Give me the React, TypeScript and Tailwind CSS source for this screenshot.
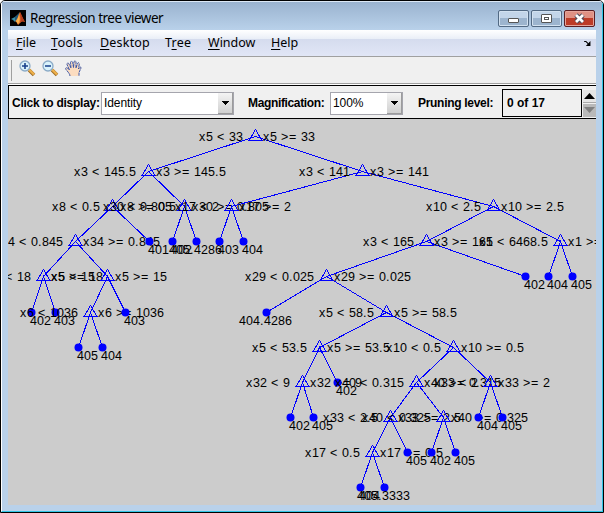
import React from "react";

type Split = { x: number; y: number; name: string; cut: string; l: Node; r: Node };
type Leaf = { x: number; y: number; value: string };
type Node = Split | Leaf;

const split = (x: number, row: number, name: string, cut: string, l: Node, r: Node): Split => ({
  x,
  y: rowY[row],
  name,
  cut,
  l,
  r,
});
const leaf = (x: number, row: number, value: string): Leaf => ({ x, y: rowY[row], value });

const rowY = [136, 171, 206, 241, 276, 312, 347, 382, 417, 452, 487];

const tree: Node = split(255, 0, "x5", "33",
  split(148, 1, "x3", "145.5",
    split(112, 2, "x8", "0.5",
      split(75, 3, "x34", "0.845",
        split(43, 4, "x5", "18", leaf(31, 5, "402"), leaf(55, 5, "403")),
        split(107, 4, "x5", "15",
          split(90, 5, "x6", "1036", leaf(78, 6, "405"), leaf(102, 6, "404")),
          leaf(125, 5, "403"))),
      leaf(149, 3, "401")),
    split(184, 2, "x30", "0.805", leaf(172, 3, "402"), leaf(196, 3, "405.4286"))),
  split(362, 1, "x3", "141",
    split(231, 2, "x17", "2", leaf(219, 3, "403"), leaf(243, 3, "404")),
    split(493, 2, "x10", "2.5",
      split(426, 3, "x3", "165",
        split(326, 4, "x29", "0.025",
          leaf(266, 5, "404.4286"),
          split(386, 5, "x5", "58.5",
            split(319, 6, "x5", "53.5",
              split(302, 7, "x32", "9", leaf(290, 8, "402"), leaf(313, 8, "405")),
              leaf(337, 7, "402")),
            split(453, 6, "x10", "0.5",
              split(416, 7, "x40", "0.315",
                split(390, 8, "x33", "2.5",
                  split(372, 9, "x17", "0.5", leaf(360, 10, "404"), leaf(384, 10, "405.3333")),
                  leaf(407, 9, "405")),
                split(443, 8, "x40", "0.325", leaf(431, 9, "402"), leaf(455, 9, "405"))),
              split(490, 7, "x33", "2", leaf(478, 8, "404"), leaf(502, 8, "405"))))),
        leaf(525, 4, "402")),
      split(560, 3, "x1", "6468.5", leaf(548, 4, "404"), leaf(572, 4, "405")))));

const advance = (c: string) => (c === " " || c === "." ? 4 : c === "<" || c === ">" || c === "=" ? 8 : 7);
const widthOf = (s: string) => [...s].reduce((n, c) => n + advance(c), 0);

function Label({ x, y, text }: { x: number; y: number; text: string }) {
  let at = x;
  const xs = [...text].map((c) => {
    const here = at;
    at += advance(c);
    return here;
  });
  return (
    <text x={xs.join(" ")} y={y} fill="#000" xmlSpace="preserve">
      {text}
    </text>
  );
}

function Branch({ node }: { node: Node }) {
  const { x, y } = node;
  if ("value" in node) {
    const left = node.value.length > 3 ? x - 27 : x - 1;
    return (
      <g>
        <circle cx={x + 0.5} cy={y + 0.5} r="4" fill="#00f" />
        <Label x={left} y={y + 13} text={node.value} />
      </g>
    );
  }
  const lower = `${node.name} < ${node.cut}`;
  return (
    <g>
      <path
        d={`M${node.l.x + 0.5} ${node.l.y + 0.5}L${x + 0.5} ${y + 0.5}L${node.r.x + 0.5} ${node.r.y + 0.5}M${x + 0.5} ${y - 6.5}l-6.5 11h13z`}
        fill="none"
        stroke="#00f"
        shapeRendering="crispEdges"
      />
      <Branch node={node.l} />
      <Branch node={node.r} />
      <Label x={x - 12 - widthOf(lower)} y={y + 5} text={lower} />
      <Label x={x + 8} y={y + 5} text={`${node.name} >= ${node.cut}`} />
    </g>
  );
}

function MatlabIcon() {
  return (
    <svg width="16" height="16" viewBox="0 0 16 16" className="bg-black">
      <path d="M1 9l4-2 3-2 2-2-2 5-3 4-2-2z" fill="#3a8fa8" />
      <path d="M5 7l3-3 2-2-2 6-3 3z" fill="#245b78" />
      <path d="M5 11c2 0 3-5 5-9 1 2 2 6 5 10-2-1-3-1-4 0l-3 3c-1-2-1-3-3-4z" fill="#e8772b" />
      <path d="M10 2c0 4 1 8 0 11 1-1 2-2 5-1-2-3-3-7-5-10z" fill="#b53c1c" />
      <path d="M9 5c1 3 1 6-1 9-1-1-1-2-2-3 1-1 2-3 3-6z" fill="#f8b34c" />
    </svg>
  );
}

function ZoomIcon({ plus }: { plus?: boolean }) {
  return (
    <svg width="17" height="17" viewBox="0 0 17 17">
      <path d="M10 10l5 5" stroke="#9a6a25" strokeWidth="3.6" />
      <path d="M10 9.5l5 5" stroke="#eeb04a" strokeWidth="2.4" />
      <circle cx="6" cy="6" r="5" fill="#d9f2fb" stroke="#8babc7" strokeWidth="1.3" />
      <path d={plus ? "M3 6h6M6 3v6" : "M3 6h6"} stroke="#17408c" strokeWidth="1.6" />
    </svg>
  );
}

const handShape =
  "M5 16c0-2-2-4-4-6.5C0 8 1.5 7 2.5 8L4.500 10 2 4.500C1.500 3 3.500 2.500 4 4l2 4L5.500 2.500c0-1.500 2-1.500 2.200 0L8.500 7.500 9 2c.2-1.500 2-1.200 2 0v6l1.500-4.500c.5-1.300 2-.8 1.800.6L13.500 9l1-1.500c1-1 2 0 1.300 1L14 12.500V16";

function HandIcon() {
  return (
    <svg width="17" height="17" viewBox="0 0 17 17">
      <path d={handShape} fill="#fbdcc0" stroke="#2947a0" strokeWidth=".9" strokeDasharray="3 .5" />
    </svg>
  );
}

function Combo({ value, className }: { value: string; className: string }) {
  return (
    <div className={`flex h-[23px] shrink-0 items-center border border-[#a5a5ad] bg-white pl-[2px] text-[12px] ${className}`}>
      <span className="grow tracking-[-0.1px]">{value}</span>
      <span className="flex h-[21px] w-[15px] items-center justify-center border-r border-b border-[#9c9c9c] bg-linear-to-b from-[#f4f4f4] to-[#d0d0d0]">
        <svg width="7" height="4" viewBox="0 0 7 4" shapeRendering="crispEdges">
          <path d="M0 0h7L3.500 4z" />
        </svg>
      </span>
    </div>
  );
}

const menus: [string, string, string, string][] = [
  ["", "F", "ile", "w-[35px]"],
  ["", "T", "ools", "w-[49px] tracking-[0.3px]"],
  ["", "D", "esktop", "w-[65px] tracking-[0.2px]"],
  ["T", "r", "ee", "w-[43px] tracking-[0.2px]"],
  ["", "W", "indow", "w-[63px]"],
  ["", "H", "elp", "w-[40px]"],
];

export default function App() {
  return (
    <div className="flex h-[513px] w-[604px] flex-col overflow-hidden rounded-t-[5px] border border-black bg-[#b9d1ea] font-[family-name:'Liberation_Sans',Arial,sans-serif] text-black">
      <div className="flex grow flex-col border-r border-b border-l border-r-[#32c5e5] border-b-[#32c5e5] border-l-white">
        <header className="flex h-[29px] shrink-0 items-start border-t border-[#dce8f5] bg-linear-to-b from-[#9ab3cf] to-[#b9d1ea] pl-2">
          <div className="mt-2">
            <MatlabIcon />
          </div>
          <h1 className="mt-[6px] ml-1 grow font-[family-name:'Noto_Sans',sans-serif] text-[13.5px] leading-5 tracking-[-0.5px] whitespace-nowrap">
            Regression tree viewer
          </h1>
          <div className="mt-2 mr-[7px] flex gap-[2px]">
            <span className="flex h-[17px] w-[31px] items-center justify-center rounded-[2px] border border-[#526983] bg-linear-to-b from-[#c3d5e9] from-50% to-[#9cb4ce] to-50% shadow-[inset_0_0_0_1px_#d2e1f0]">
              <span className="mt-1 h-[5px] w-[11px] rounded-[1px] border border-[#555] bg-white" />
            </span>
            <span className="flex h-[17px] w-[31px] items-center justify-center rounded-[2px] border border-[#526983] bg-linear-to-b from-[#c3d5e9] from-50% to-[#9cb4ce] to-50% shadow-[inset_0_0_0_1px_#d2e1f0]">
              <span className="flex h-[9px] w-[11px] items-center justify-center rounded-[1px] border border-[#555] bg-white">
                <span className="h-[3px] w-[5px] border border-[#555]" />
              </span>
            </span>
            <span className="flex h-[17px] w-[31px] items-center justify-center rounded-[2px] border border-[#5b1f24] bg-linear-to-b from-[#df9184] from-45% to-[#bd3c28] to-50% shadow-[inset_0_0_0_1px_#e5a59b]">
              <svg width="13" height="11" viewBox="0 0 13 11">
                <path d="M3 2l7 7M10 2L3 9" stroke="#4d4c5b" strokeWidth="4.6" />
                <path d="M3 2l7 7M10 2L3 9" stroke="#fff" strokeWidth="2.7" />
              </svg>
            </span>
          </div>
        </header>
        <main className="mr-[6px] mb-[6px] ml-[6px] flex grow flex-col">
          <nav className="flex h-[27px] shrink-0 items-center border-b border-[#a0a0a0] bg-[linear-gradient(to_bottom,#fff_0%,#e9eef7_35%,#d5dcee_36%,#e1e6f6_100%)] pl-2 font-[family-name:'Noto_Sans',sans-serif] text-[12.5px]">
            {menus.map(([pre, key, rest, width]) => (
              <span key={key} className={`shrink-0 ${width}`}>
                {pre}
                <span className="underline underline-offset-2">{key}</span>
                {rest}
              </span>
            ))}
            <svg width="7" height="5" viewBox="0 0 8 6" className="mr-[5px] ml-auto">
              <path d="M0 .5h2l3 3" fill="none" stroke="#000" strokeWidth="1.3" />
              <path d="M7.500 0v6H2z" />
            </svg>
          </nav>
          <div className="flex h-[27px] shrink-0 items-start border-b border-[#a0a0a0] bg-[#f0f0f0] pt-[3px] pl-[3px]">
            <span className="mr-[7px] h-[21px] w-px bg-[#a0a0a0]" />
            <ZoomIcon plus />
            <span className="w-[6px]" />
            <ZoomIcon />
            <span className="w-[6px]" />
            <HandIcon />
          </div>
          <div className="h-px shrink-0 bg-white" />
          <div className="flex h-[34px] shrink-0 items-center border border-r-0 border-black bg-[#f0f0f0] pt-[2px] pl-[3px] text-[12px]">
            <span className="w-[89px] shrink-0 font-bold tracking-[-0.25px] whitespace-nowrap">Click to display:</span>
            <Combo value="Identity" className="w-[133px]" />
            <span className="ml-[14px] w-[82px] shrink-0 font-bold tracking-[-0.35px] whitespace-nowrap">Magnification:</span>
            <Combo value="100%" className="w-[73px]" />
            <span className="ml-[15px] w-[84px] shrink-0 font-bold tracking-[-0.3px] whitespace-nowrap">Pruning level:</span>
            <span className="flex h-[28px] w-[80px] shrink-0 items-center border border-black pl-1 font-bold">0 of 17</span>
            <div className="ml-px flex w-[13px] shrink-0 flex-col gap-px">
              <span className="flex h-[13px] items-center justify-center border-b border-[#aaa] bg-[#e5e5e5]">
                <svg width="11" height="6" viewBox="0 0 11 6">
                  <path d="M5.500 0L11 6H0z" />
                </svg>
              </span>
              <span className="flex h-[13px] items-center justify-center bg-[#b9b9b9]">
                <svg width="11" height="6" viewBox="0 0 11 6">
                  <path d="M0 0h11L5.500 6z" fill="#808080" />
                </svg>
              </span>
            </div>
          </div>
          <svg
            width="588"
            height="386"
            viewBox="8 119 588 386"
            className="shrink-0 bg-[#cccccc] font-[family-name:'Liberation_Sans',Arial,sans-serif] text-[12.5px]"
          >
            <Branch node={tree} />
          </svg>
        </main>
      </div>
    </div>
  );
}
